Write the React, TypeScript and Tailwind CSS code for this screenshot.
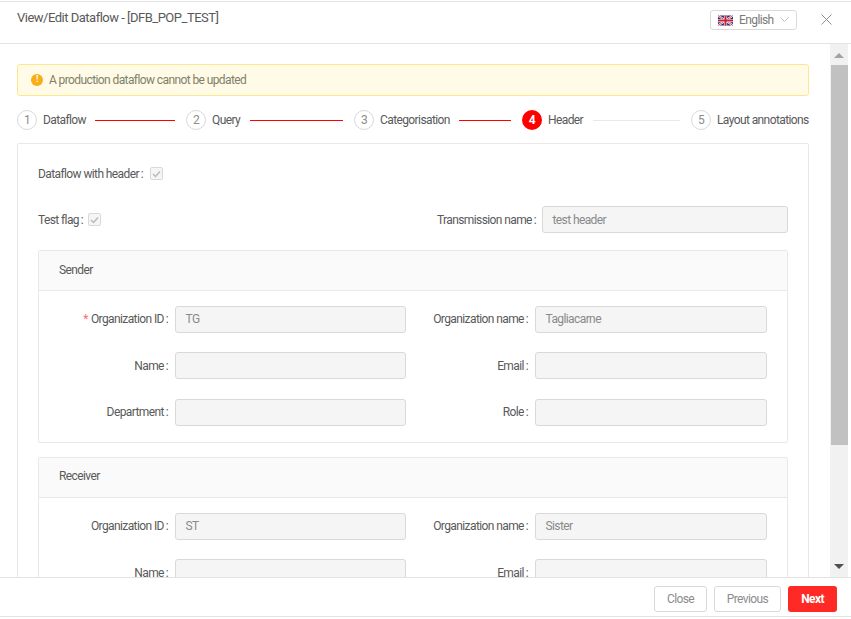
import React from "react";

const font = "font-['Roboto',sans-serif] tracking-[-0.6px]";

function Flag() {
  return (
    <svg width="15" height="11" viewBox="0 0 60 40" className="shrink-0">
      <rect width="60" height="40" fill="#1f2f72" />
      <path d="M0 0L60 40M60 0L0 40" stroke="#fff" strokeWidth="8" />
      <path d="M0 0L60 40M60 0L0 40" stroke="#c8203a" strokeWidth="3" />
      <path d="M30 0V40M0 20H60" stroke="#fff" strokeWidth="13" />
      <path d="M30 0V40M0 20H60" stroke="#c8203a" strokeWidth="8" />
    </svg>
  );
}

function Step({ n, label, labelClass, active }: { n: number; label: string; labelClass: string; active?: boolean }) {
  return (
    <div className="flex items-center gap-[6px] shrink-0">
      <div
        className={
          active
            ? "w-[20px] h-[20px] rounded-full bg-[#ff0000] text-white font-bold flex items-center justify-center text-[12px]"
            : "w-[20px] h-[20px] rounded-full border border-[#d9d9d9] text-[#8c8c8c] flex items-center justify-center text-[12px]"
        }
      >
        {n}
      </div>
      <span className={`${labelClass} text-[12px] text-[#595959] whitespace-nowrap`}>{label}</span>
    </div>
  );
}

function Line({ widthClass, on }: { widthClass: string; on?: boolean }) {
  return <div className={`${widthClass} ${on ? "bg-[#ff0000]" : "bg-[#e8e8e8]"} h-px shrink-0 ml-[10px] mr-[11px]`} />;
}

function Check() {
  return (
    <div className="w-[13px] h-[13px] rounded-[2px] border border-[#d9d9d9] bg-[#f5f5f5] flex items-center justify-center">
      <svg width="9" height="8" viewBox="0 0 9 8" fill="none">
        <path d="M1 4l2.5 2.5L8 1.5" stroke="#b8b8b8" strokeWidth="1.4" />
      </svg>
    </div>
  );
}

function Input({ value }: { value?: string }) {
  return (
    <div className="h-[27px] rounded-[3px] border border-[#d9d9d9] bg-[#f5f5f5] px-[9.5px] flex items-center text-[12px] text-[#8a8a8a]">
      {value}
    </div>
  );
}

function Label({ text, req }: { text: string; req?: boolean }) {
  return (
    <div className="flex items-center justify-end pr-[7px] h-[27px] text-[12px] text-[#595959] whitespace-pre">
      {req && <span className="text-[#ff6b70] mr-[3px]">*</span>}
      {text}{"\u2009:"}
    </div>
  );
}

function Panel({ title, rows }: { title: string; rows: [string, string | undefined, string, string | undefined, boolean?][] }) {
  return (
    <div className="border border-[#e8e8e8] rounded-[2px]">
      <div className="h-[40px] bg-[#fafafa] border-b border-[#e8e8e8] flex items-center pl-[20px] pb-[2px] text-[12px] text-[#595959]">{title}</div>
      <div className="grid grid-cols-[136px_231px_129px_232px] gap-y-[19.5px] pt-[14.8px] pb-[16px] pr-[20px]">
        {rows.map(([a, av, b, bv, req]) => (
          <React.Fragment key={a}>
            <Label text={a} req={req} />
            <Input value={av} />
            <Label text={b} />
            <Input value={bv} />
          </React.Fragment>
        ))}
      </div>
    </div>
  );
}

export default function App() {
  return (
    <div className={`${font} w-[851px] h-[619px] bg-white flex flex-col overflow-hidden`}>
      <div className="mt-px h-[43px] shrink-0 border-t border-b border-[#e3e3e3] flex items-center pl-[17px] pr-[19px]">
        <div className="text-[13px] tracking-[-0.5px] text-[#595959] -mt-[9px]">View/Edit Dataflow - [DFB_POP_TEST]</div>
        <div className="ml-auto -mt-[5px] w-[87px] h-[20px] rounded-[3px] border border-[#d9d9d9] flex items-center pl-[7px] gap-[6px] text-[12px] text-[#7a7a7a]">
          <Flag />
          English
          <svg width="9" height="6" viewBox="0 0 9 6" fill="none"><path d="M.5.5l4 4 4-4" stroke="#bfbfbf" /></svg>
        </div>
        <svg className="ml-[24px] -mt-[7px]" width="11" height="11" viewBox="0 0 11 11" fill="none"><path d="M.5.5l10 10M10.5.5l-10 10" stroke="#8c8c8c" /></svg>
      </div>
      <div className="flex-1 min-h-0 flex">
        <div className="flex-1 min-w-0 overflow-hidden pl-[17px] pr-[21px] pt-[20px]">
          <div className="h-[32px] rounded-[3px] border border-[#ffe58f] bg-[#fffbe6] flex items-center pl-[13px] gap-[6px] text-[12px] text-[#7f7f6a]">
            <div className="w-[12px] h-[12px] rounded-full bg-[#faad14] text-white text-[9px] font-bold flex items-center justify-center">!</div>
            A production dataflow cannot be updated
          </div>
          <div className="mt-[14px] h-[20px] flex items-center">
            <Step n={1} label="Dataflow" labelClass="w-[42px]" />
            <Line widthClass="w-[80px]" on />
            <Step n={2} label="Query" labelClass="w-[28px]" />
            <Line widthClass="w-[93px]" on />
            <Step n={3} label="Categorisation" labelClass="w-[69px]" />
            <Line widthClass="w-[52px]" on />
            <Step n={4} label="Header" labelClass="w-[35px]" active />
            <Line widthClass="w-[87px]" />
            <Step n={5} label="Layout annotations" labelClass="w-[92px]" />
          </div>
          <div className="mt-[13px] border border-[#e8e8e8] rounded-[2px] px-[20px] pt-[16px]">
            <div className="flex items-center h-[27px] text-[12px] text-[#595959] gap-[7px] whitespace-pre">
              {"Dataflow with header\u2009:"}
              <Check />
            </div>
            <div className="mt-[19px] flex items-center justify-between">
              <div className="flex items-center text-[12px] text-[#595959] gap-[5px] whitespace-pre">
                {"Test flag\u2009:"}
                <Check />
              </div>
              <div className="flex items-center text-[12px] text-[#595959] gap-[6px] whitespace-pre">
                {"Transmission name\u2009:"}
                <div className="w-[246px]"><Input value="test header" /></div>
              </div>
            </div>
            <div className="mt-[17px]">
              <Panel
                title="Sender"
                rows={[
                  ["Organization ID", "TG", "Organization name", "Tagliacarne", true],
                  ["Name", undefined, "Email", undefined],
                  ["Department", undefined, "Role", undefined],
                ]}
              />
            </div>
            <div className="mt-[14px]">
              <Panel
                title="Receiver"
                rows={[
                  ["Organization ID", "ST", "Organization name", "Sister"],
                  ["Name", undefined, "Email", undefined],
                ]}
              />
            </div>
          </div>
        </div>
        <div className="w-[18px] shrink-0 bg-[#f1f1f1] flex flex-col items-center">
          <svg className="mt-[9px]" width="10" height="5" viewBox="0 0 10 5"><path d="M0 5L5 0l5 5z" fill="#a3a3a3" /></svg>
          <div className="mt-[7px] w-[17px] h-[380px] bg-[#c1c1c1]" />
          <svg className="mt-auto mb-[8px]" width="10" height="5" viewBox="0 0 10 5"><path d="M0 0l5 5 5-5z" fill="#505050" /></svg>
        </div>
        <div className="w-[3px] shrink-0" />
      </div>
      <div className="h-[40px] shrink-0 border-t border-b border-[#e3e3e3] flex items-center justify-end pr-[14px] pt-[3px] gap-[7px] mb-[2px]">
        <div className="w-[53px] h-[26px] rounded-[3px] border border-[#d9d9d9] flex items-center justify-center text-[12px] text-[#8c8c8c]">Close</div>
        <div className="w-[67px] h-[26px] rounded-[3px] border border-[#d9d9d9] flex items-center justify-center text-[12px] text-[#8c8c8c]">Previous</div>
        <div className="w-[49px] h-[26px] rounded-[3px] bg-[#ff2a26] flex items-center justify-center text-[12px] text-white font-bold">Next</div>
      </div>
    </div>
  );
}
